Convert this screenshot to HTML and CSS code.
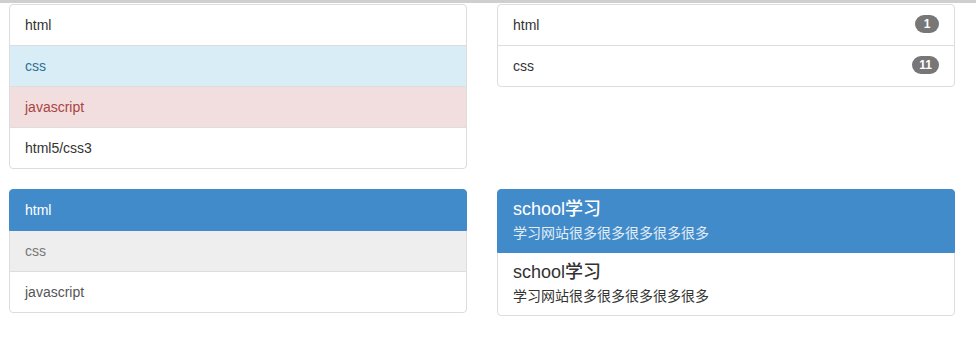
FILE: index.html
```html
<!DOCTYPE html>
<html lang="zh-CN">
<head>
    <meta charset="utf-8">
    <title>List group</title>
    <link rel="stylesheet" href="styles.css">
</head>
<body>

<div class="topbar"></div>

<div class="page">
    <ul class="list-group">
        <li class="list-group-item">html</li>
        <li class="list-group-item item-info">css</li>
        <li class="list-group-item item-danger">javascript</li>
        <li class="list-group-item">html5/css3</li>
    </ul>

    <ul class="list-group">
        <li class="list-group-item">html <span class="badge">1</span></li>
        <li class="list-group-item">css <span class="badge">11</span></li>
    </ul>

    <div class="list-group">
        <a href="#" class="list-group-item active">html</a>
        <a href="#" class="list-group-item disabled">css</a>
        <a href="#" class="list-group-item">javascript</a>
    </div>

    <div class="list-group">
        <a href="#" class="list-group-item active">
            <h4 class="list-group-item-heading">school学习</h4>
            <p class="list-group-item-text">学习网站很多很多很多很多很多</p>
        </a>
        <a href="#" class="list-group-item">
            <h4 class="list-group-item-heading">school学习</h4>
            <p class="list-group-item-text">学习网站很多很多很多很多很多</p>
        </a>
    </div>
</div>

</body>
</html>
```

FILE: styles.css
```css
body {
    margin: 0;
    font-family: "Liberation Sans", Arial, "Noto Sans CJK SC", sans-serif;
    font-size: 14px;
    line-height: 20px;
    color: #333;
    background-color: #fff;
}
.topbar {
    height: 3px;
    background-color: #cfcfcf;
    border-bottom: 1px solid #fff;
}
.page {
    display: grid;
    grid-template-columns: 458px 458px;
    column-gap: 30px;
    align-items: start;
    padding: 0 9px;
}
.list-group {
    display: flex;
    flex-direction: column;
    margin: 0 0 20px;
    padding: 0;
    list-style: none;
}
.list-group-item {
    position: relative;
    display: block;
    padding: 10px 15px;
    margin-bottom: -1px;
    background-color: #fff;
    border: 1px solid #ddd;
    text-decoration: none;
    color: #333;
}
.list-group-item:first-child {
    border-top-left-radius: 4px;
    border-top-right-radius: 4px;
}
.list-group-item:last-child {
    margin-bottom: 0;
    border-bottom-left-radius: 4px;
    border-bottom-right-radius: 4px;
}
a.list-group-item {
    color: #555;
}
.item-info {
    background-color: #d9edf7;
    color: #31708f;
}
.item-danger {
    background-color: #f2dede;
    color: #a94442;
}
.list-group-item.active {
    z-index: 2;
    background-color: #428bca;
    border-color: #428bca;
    color: #fff;
}
.list-group-item.disabled {
    background-color: #eee;
    color: #777;
}
.badge {
    float: right;
    min-width: 10px;
    padding: 3px 7px;
    font-size: 12px;
    font-weight: bold;
    line-height: 1;
    color: #fff;
    text-align: center;
    background-color: #777;
    border-radius: 10px;
}
.list-group-item-heading {
    height: 19px;
    margin: 0 0 5px;
    font-size: 18px;
    font-weight: 500;
    line-height: 19px;
    color: #333;
}
.list-group-item-text {
    height: 18px;
    margin: 0;
    line-height: 18px;
    color: #333;
}
.list-group-item.active .list-group-item-heading {
    color: #fff;
}
.list-group-item.active .list-group-item-text {
    color: #e1edf7;
}
```
